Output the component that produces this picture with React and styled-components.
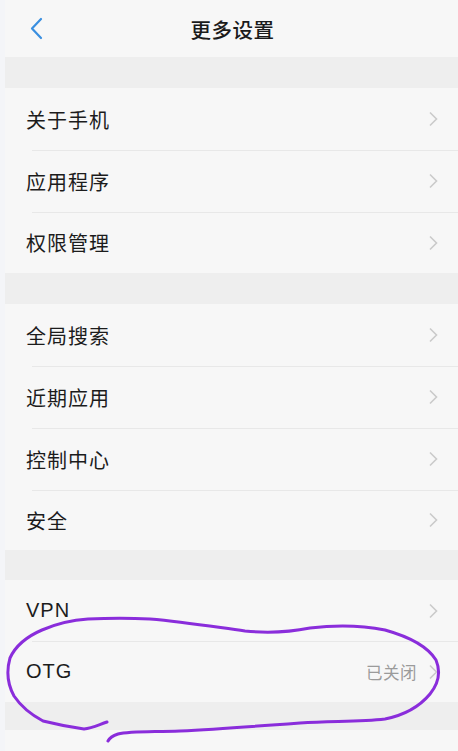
import React from "react";
import styled, { createGlobalStyle } from "styled-components";

const Global = createGlobalStyle`
  html, body { margin: 0; padding: 0; background: #f4f5f8; }
  body { font-family: "Liberation Sans", "Noto Sans CJK SC", sans-serif; }
  #root { height: 751px; overflow: hidden; }
`;

const Page = styled.div`
  position: relative;
  width: 458px;
  height: 751px;
  padding-left: 5px;
  box-sizing: border-box;
  overflow: hidden;
  background: #f4f5f8;
`;

const Main = styled.div`
  display: flex;
  flex-direction: column;
  background: #f7f7f7;
  height: 100%;
`;

const Header = styled.div`
  position: relative;
  height: 57px;
  display: flex;
  align-items: center;
  justify-content: center;
  background: #f7f7f7;
`;

const Back = styled.div`
  position: absolute;
  left: 22px;
  top: 16px;
  width: 20px;
  height: 26px;
  display: flex;
`;

const Title = styled.div`
  font-family: "Noto Sans CJK SC", sans-serif;
  font-size: 20.5px;
  font-weight: 500;
  color: #1b1b1b;
  letter-spacing: 0.5px;
  margin-left: 2px;
`;

const Band = styled.div`
  height: ${(p) => p.$h}px;
  background: #eeeeee;
  flex-shrink: 0;
`;

const Group = styled.div`
  display: flex;
  flex-direction: column;
  background: #f7f7f7;
`;

const Row = styled.div`
  position: relative;
  height: ${(p) => p.$h}px;
  display: flex;
  align-items: center;
  padding: 0 20px 0 21px;
  &::before {
    content: "";
    display: ${(p) => (p.$first ? "none" : "block")};
    position: absolute;
    top: 0;
    left: 27px;
    right: 0;
    height: 1px;
    background: #e8e8e8;
  }
`;

const Label = styled.div`
  flex: 1;
  font-size: 20px;
  color: #1c1c1c;
  letter-spacing: 1px;
`;

const Value = styled.div`
  font-size: 16.5px;
  color: #9b9b9b;
  margin-right: 11px;
  letter-spacing: 0.5px;
`;

const Chevron = () => (
  <svg width="10" height="16" viewBox="0 0 10 16">
    <path d="M2 1.5 L8.5 8 L2 14.5" fill="none" stroke="#cacaca" strokeWidth="1.6" />
  </svg>
);

const Scribble = styled.svg`
  position: absolute;
  left: 0;
  top: 0;
  pointer-events: none;
`;

const Rest = styled.div`
  flex: 1;
  background: #f7f7f7;
`;

const groups = [
  { items: ["关于手机", "应用程序", "权限管理"] },
  { items: ["全局搜索", "近期应用", "控制中心", "安全"] },
  { items: ["VPN", { label: "OTG", value: "已关闭" }] },
];

export default function App() {
  return (
    <>
      <Global />
      <Page>
        <Main>
          <Header>
            <Back>
              <svg width="20" height="26" viewBox="0 0 20 26">
                <path d="M14 3 L5 12.5 L14 22" fill="none" stroke="#3a8fe0" strokeWidth="2.2" strokeLinecap="round" strokeLinejoin="round" />
              </svg>
            </Back>
            <Title>更多设置</Title>
          </Header>
          <Band $h={31} />
          <Group>
            {groups[0].items.map((t, i) => (
              <Row key={t} $first={i === 0} $h={i === 2 ? 61 : 62}>
                <Label>{t}</Label>
                <Chevron />
              </Row>
            ))}
          </Group>
          <Band $h={31} />
          <Group>
            {groups[1].items.map((t, i) => (
              <Row key={t} $first={i === 0} $h={i === 3 ? 60 : 62}>
                <Label>{t}</Label>
                <Chevron />
              </Row>
            ))}
          </Group>
          <Band $h={30} />
          <Group>
            {groups[2].items.map((t, i) => {
              const label = typeof t === "string" ? t : t.label;
              const value = typeof t === "string" ? null : t.value;
              return (
                <Row key={label} $first={i === 0} $h={61}>
                  <Label>{label}</Label>
                  {value && <Value>{value}</Value>}
                  <Chevron />
                </Row>
              );
            })}
          </Group>
          <Band $h={28} />
          <Rest />
        </Main>
        <Scribble width="458" height="751" viewBox="0 0 458 751">
          <path
            d="M107 722 C98 725 92 728 84 729 C70 727 55 724 43 721 C30 714 20 705 14 696 C8 685 6 672 10 658 C16 645 28 636 42 630 C58 623 72 620 88 619 C110 618 130 618 150 619 C185 622 215 627 245 631 C265 633 290 632 310 628 C335 625 360 625 385 630 C410 637 428 647 436 660 C441 672 438 684 430 694 C420 706 405 715 385 719 C360 722 335 721 300 723 C260 726 220 729 180 731 C150 732 130 731 118 734 C112 736 109 739 108 741"
            fill="none"
            stroke="#8a2ddb"
            strokeWidth="3"
            strokeLinecap="round"
            strokeLinejoin="round"
          />
        </Scribble>
      </Page>
    </>
  );
}
